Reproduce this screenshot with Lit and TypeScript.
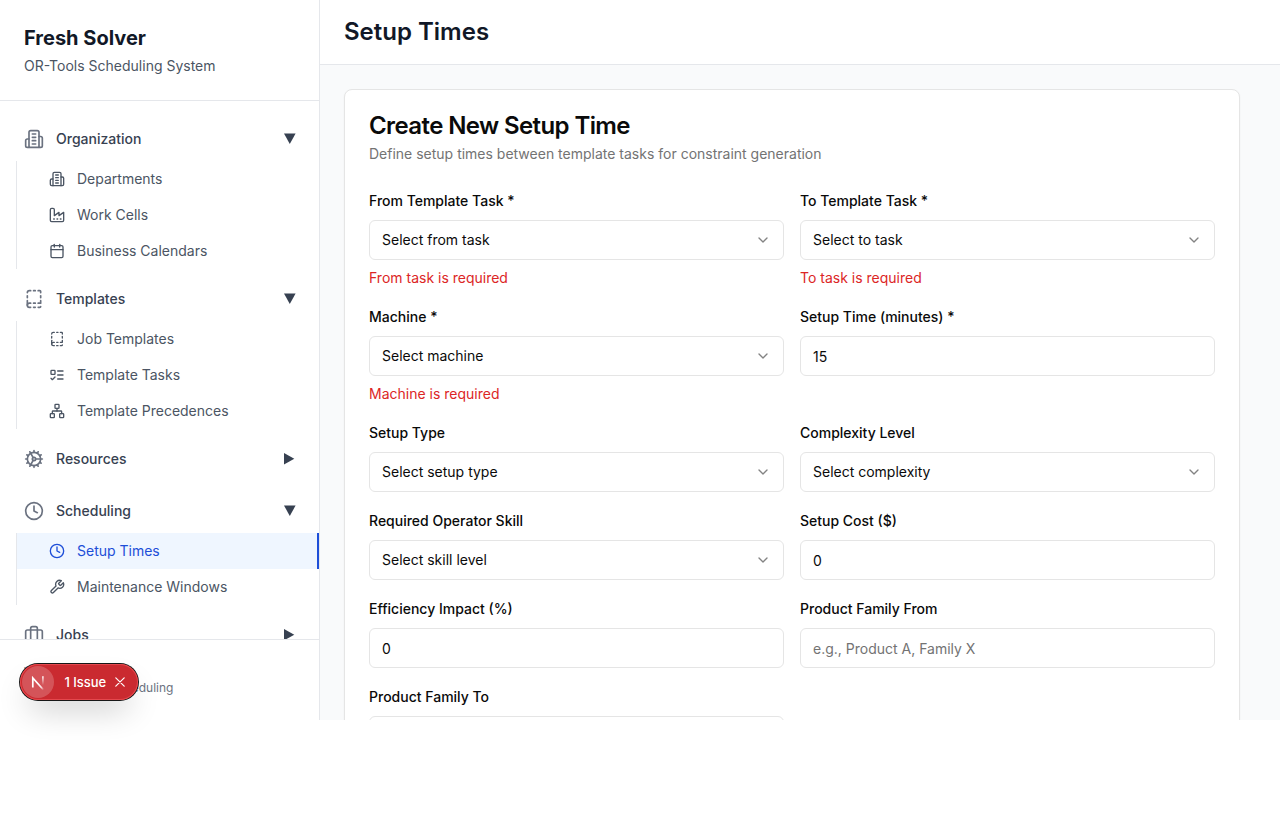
import { LitElement, html, css, svg } from "lit";
import { customElement, property } from "lit/decorators.js";

const paths: Record<string, string[]> = {
  building: ["M6 22V4a2 2 0 0 1 2-2h8a2 2 0 0 1 2 2v18Z", "M6 12H4a2 2 0 0 0-2 2v6a2 2 0 0 0 2 2h2", "M18 9h2a2 2 0 0 1 2 2v9a2 2 0 0 1-2 2h-2", "M10 6h4", "M10 10h4", "M10 14h4", "M10 18h4"],
  factory: ["M2 20a2 2 0 0 0 2 2h16a2 2 0 0 0 2-2V8l-7 5V8l-7 5V4a2 2 0 0 0-2-2H4a2 2 0 0 0-2 2Z", "M17 18h1", "M12 18h1", "M7 18h1"],
  calendar: ["M8 2v4", "M16 2v4", "M5 4h14a2 2 0 0 1 2 2v14a2 2 0 0 1-2 2H5a2 2 0 0 1-2-2V6a2 2 0 0 1 2-2Z", "M3 10h18"],
  template: ["M11.5 17h2", "M11.5 22h2", "M11.5 2h2", "M17 22h2a1 1 0 0 0 1-1", "M17 2h2a1 1 0 0 1 1 1v1.5", "M20 14v3h-3", "M20 8.2v2.3", "M4 10.5V8.2", "M4 19.5V14", "M4 4.5A2.5 2.5 0 0 1 6.5 2H8", "M8 22H6.5a2.5 2.5 0 0 1 0-5H8"],
  tasks: ["M4 5h4a1 1 0 0 1 1 1v4a1 1 0 0 1-1 1H4a1 1 0 0 1-1-1V6a1 1 0 0 1 1-1Z", "m3 17 2 2 4-4", "M13 6h8", "M13 12h8", "M13 18h8"],
  network: ["M17 16h4a1 1 0 0 1 1 1v4a1 1 0 0 1-1 1h-4a1 1 0 0 1-1-1v-4a1 1 0 0 1 1-1Z", "M3 16h4a1 1 0 0 1 1 1v4a1 1 0 0 1-1 1H3a1 1 0 0 1-1-1v-4a1 1 0 0 1 1-1Z", "M10 2h4a1 1 0 0 1 1 1v4a1 1 0 0 1-1 1h-4a1 1 0 0 1-1-1V3a1 1 0 0 1 1-1Z", "M5 16v-3a1 1 0 0 1 1-1h12a1 1 0 0 1 1 1v3", "M12 12V8"],
  cog: ["M12 20a8 8 0 1 0 0-16 8 8 0 0 0 0 16Z", "M12 14a2 2 0 1 0 0-4 2 2 0 0 0 0 4Z", "M12 2v2", "M12 22v-2", "m17 20.66-1-1.73", "M11 10.27 7 3.34", "m20.66 17-1.73-1", "m3.34 7 1.73 1", "M14 12h8", "M2 12h2", "m20.66 7-1.73 1", "m3.34 17 1.73-1", "m17 3.34-1 1.73", "m11 13.73-4 6.93"],
  clock: ["M12 22a10 10 0 1 0 0-20 10 10 0 0 0 0 20Z", "M12 6v6l4 2"],
  wrench: ["M14.7 6.3a1 1 0 0 0 0 1.4l1.6 1.6a1 1 0 0 0 1.4 0l3.77-3.77a6 6 0 0 1-7.94 7.94l-6.91 6.91a2.12 2.12 0 0 1-3-3l6.91-6.91a6 6 0 0 1 7.94-7.94l-3.76 3.76z"],
  briefcase: ["M16 20V4a2 2 0 0 0-2-2h-4a2 2 0 0 0-2 2v16", "M4 6h16a2 2 0 0 1 2 2v10a2 2 0 0 1-2 2H4a2 2 0 0 1-2-2V8a2 2 0 0 1 2-2Z"],
  chevron: ["m6 9 6 6 6-6"],
};

@customElement("line-icon")
class LineIcon extends LitElement {
  @property() name = "";
  static styles = css`
    :host { display: block; flex: none; }
    svg { display: block; width: 100%; height: 100%; fill: none; stroke: currentColor; stroke-width: 2; stroke-linecap: round; stroke-linejoin: round; }
  `;
  render() {
    return html`<svg viewBox="0 0 24 24">${paths[this.name].map((d) => svg`<path d=${d}></path>`)}</svg>`;
  }
}

type Item = [string, string];
const groups: { label: string; icon: string; items: Item[] }[] = [
  { label: "Organization", icon: "building", items: [["building", "Departments"], ["factory", "Work Cells"], ["calendar", "Business Calendars"]] },
  { label: "Templates", icon: "template", items: [["template", "Job Templates"], ["tasks", "Template Tasks"], ["network", "Template Precedences"]] },
  { label: "Resources", icon: "cog", items: [] },
  { label: "Scheduling", icon: "clock", items: [["clock", "Setup Times"], ["wrench", "Maintenance Windows"]] },
  { label: "Jobs", icon: "briefcase", items: [] },
];

interface Field { label: string; kind: "select" | "input"; value?: string; placeholder?: string; error?: string }
const fields: Field[] = [
  { label: "From Template Task *", kind: "select", value: "Select from task", error: "From task is required" },
  { label: "To Template Task *", kind: "select", value: "Select to task", error: "To task is required" },
  { label: "Machine *", kind: "select", value: "Select machine", error: "Machine is required" },
  { label: "Setup Time (minutes) *", kind: "input", value: "15" },
  { label: "Setup Type", kind: "select", value: "Select setup type" },
  { label: "Complexity Level", kind: "select", value: "Select complexity" },
  { label: "Required Operator Skill", kind: "select", value: "Select skill level" },
  { label: "Setup Cost ($)", kind: "input", value: "0" },
  { label: "Efficiency Impact (%)", kind: "input", value: "0" },
  { label: "Product Family From", kind: "input", placeholder: "e.g., Product A, Family X" },
  { label: "Product Family To", kind: "input" },
];

@customElement("app-root")
class AppRoot extends LitElement {
  static styles = css`
    :host { display: block; height: 820px; overflow: hidden; background: #fff; font: 400 14px/20px Inter, sans-serif; color: #0a0a0a; }
    * { box-sizing: border-box; }
    h1, h2, p { margin: 0; }
    .shell { display: flex; height: 720px; overflow: hidden; background: #f9fafb; }
    .sidebar { width: 320px; flex: none; display: flex; flex-direction: column; background: #fff; border-right: 1px solid #e5e7eb; }
    .brand { height: 101px; padding: 24px; border-bottom: 1px solid #e5e7eb; flex: none; }
    .brand h1 { font-size: 20px; line-height: 28px; font-weight: 700; color: #111827; }
    .brand p { margin-top: 4px; color: #4b5563; }
    .nav { flex: 1; min-height: 0; overflow: hidden; padding-top: 16px; }
    .group { margin-bottom: 8px; }
    .head { display: flex; align-items: center; gap: 12px; height: 44px; padding: 0 23px 0 24px; font-weight: 500; color: #374151; }
    .head line-icon { width: 20px; height: 20px; color: #6b7280; }
    .head .grow { flex: 1; }
    .arrow { width: 12px; height: 12px; fill: #374151; display: block; }
    .items { margin-left: 16px; border-left: 1px solid #e5e7eb; }
    .item { display: flex; align-items: center; gap: 12px; height: 36px; padding-left: 32px; color: #4b5563; }
    .item line-icon { width: 16px; height: 16px; }
    .item.active { background: #eff6ff; color: #1d4ed8; border-right: 2px solid #1d4ed8; }
    .foot { height: 81px; flex: none; padding: 24px; border-top: 1px solid #e5e7eb; font-size: 12px; line-height: 16px; color: #6b7280; white-space: nowrap; }
    .main { flex: 1; min-width: 0; }
    .top { height: 65px; padding: 16px 24px; background: #fff; border-bottom: 1px solid #e5e7eb; }
    .top h1 { font-size: 24px; line-height: 32px; font-weight: 600; color: #111827; }
    .content { padding: 24px; }
    .card { width: 896px; height: 900px; padding: 24px; background: #fff; border: 1px solid #e5e5e5; border-radius: 8px; box-shadow: 0 1px 2px rgba(0,0,0,.05); }
    .card h2 { font-size: 24px; line-height: 24px; font-weight: 600; letter-spacing: -0.6px; }
    .card .sub { margin-top: 6px; color: #737373; }
    .grid { display: grid; grid-template-columns: 1fr 1fr; gap: 16px; margin-top: 24px; }
    .field { display: flex; flex-direction: column; gap: 8px; }
    .label { font-weight: 500; height: 24px; line-height: 26px; }
    .control { height: 40px; border: 1px solid #e5e5e5; border-radius: 6px; padding: 0 12px; display: flex; align-items: center; justify-content: space-between; }
    .control line-icon { width: 16px; height: 16px; opacity: .5; }
    .control.input { padding-top: 2px; }
    .hint { color: #737373; }
    .error { color: #dc2626; }
    .badge { position: absolute; left: 20px; top: 664px; width: 118px; height: 36px; padding: 2px; border-radius: 18px; display: flex; align-items: center; background: #ca2a30; color: #fff; font-size: 13px; font-weight: 500; white-space: nowrap;
      box-shadow: 0 0 0 1px #171717, inset 0 0 0 1px #e5484d, 0 16px 32px -8px rgba(0,0,0,.24); }
    .mark { width: 32px; height: 32px; flex: none; border-radius: 50%; background: rgba(255,255,255,.2); display: block; }
    .issue { margin-left: 10.5px; width: 49.5px; letter-spacing: -.05px; }
    .close { width: 10px; height: 10px; stroke: #fff; stroke-width: 1.2; fill: none; stroke-linecap: round; display: block; margin-left: 1px; }
  `;

  private arrow(open: boolean) {
    return html`<svg class="arrow" viewBox="0 0 12 12"><path d=${open ? "M0 .5h11.6L5.8 11Z" : "M0 0v11.4L10.3 5.7Z"}></path></svg>`;
  }

  private field(f: Field) {
    return html`<div class="field">
      <div class="label">${f.label}</div>
      <div class="control ${f.kind}">
        ${f.value ? html`<span>${f.value}</span>` : html`<span class="hint">${f.placeholder}</span>`}
        ${f.kind === "select" ? html`<line-icon name="chevron"></line-icon>` : ""}
      </div>
      ${f.error ? html`<div class="error">${f.error}</div>` : ""}
    </div>`;
  }

  render() {
    return html`
      <div class="shell">
        <aside class="sidebar">
          <div class="brand"><h1>Fresh Solver</h1><p>OR-Tools Scheduling System</p></div>
          <nav class="nav">
            ${groups.map((g) => html`<div class="group">
              <div class="head"><line-icon name=${g.icon}></line-icon><span class="grow">${g.label}</span>${this.arrow(g.items.length > 0)}</div>
              ${g.items.length ? html`<div class="items">${g.items.map(([icon, label]) => html`<div class="item ${label === "Setup Times" ? "active" : ""}"><line-icon name=${icon}></line-icon>${label}</div>`)}</div>` : ""}
            </div>`)}
          </nav>
          <div class="foot"><div>Version 1.0.0</div><div>Manufacturing Scheduling</div></div>
        </aside>
        <main class="main">
          <header class="top"><h1>Setup Times</h1></header>
          <div class="content">
            <section class="card">
              <h2>Create New Setup Time</h2>
              <p class="sub">Define setup times between template tasks for constraint generation</p>
              <div class="grid">${fields.map((f) => this.field(f))}</div>
            </section>
          </div>
        </main>
      </div>
      <div class="badge">
        <svg class="mark" viewBox="0 0 32 32" fill="none">
          <defs>
            <linearGradient id="diag" x1="17" y1="17" x2="22" y2="23.5" gradientUnits="userSpaceOnUse"><stop stop-color="#fff"></stop><stop offset=".6" stop-color="#fff" stop-opacity=".8"></stop><stop offset="1" stop-color="#fff" stop-opacity="0"></stop></linearGradient>
            <linearGradient id="stem" x1="21" y1="10" x2="21" y2="19" gradientUnits="userSpaceOnUse"><stop stop-color="#fff"></stop><stop offset="1" stop-color="#fff" stop-opacity="0"></stop></linearGradient>
          </defs>
          <path d="M10.8 21.6V11.9L21.6 24" stroke="url(#diag)" stroke-width="1.7"></path>
          <path d="M20.9 10.3V19.5" stroke="url(#stem)" stroke-width="1.6"></path>
        </svg>
        <span class="issue">1 Issue</span>
        <svg class="close" viewBox="0 0 10 10"><path d="M.8.8l8.4 8.4M9.2.8.8 9.2"></path></svg>
      </div>`;
  }
}
